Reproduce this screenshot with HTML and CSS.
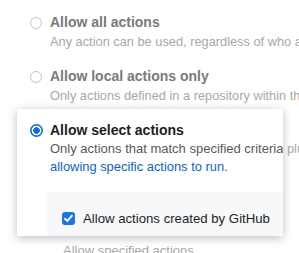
FILE: index.html
```html
<!DOCTYPE html>
<html lang="en">
<head>
    <meta charset="UTF-8">
    <meta name="viewport" content="width=device-width, initial-scale=1.0">
    <title>Actions permissions</title>
    <link rel="stylesheet" href="styles.css">
</head>
<body>
    <div class="page">
        <div class="option faded">
            <span class="radio"></span>
            <div class="option-body">
                <div class="option-title">Allow all actions</div>
                <div class="option-desc">Any action can be used, regardless of who authored it or where it is defined.</div>
            </div>
        </div>

        <div class="option faded">
            <span class="radio"></span>
            <div class="option-body">
                <div class="option-title">Allow local actions only</div>
                <div class="option-desc">Only actions defined in a repository within the enterprise can be used.</div>
            </div>
        </div>

        <div class="focus-row">
            <div class="card">
                <div class="option">
                    <span class="radio checked"></span>
                    <div class="option-body">
                        <div class="option-title">Allow select actions</div>
                        <div class="option-desc">Only actions that match specified criteria, plus actions defined in a repository within the enterprise, can be used.</div>
                        <a class="option-link" href="#">allowing specific actions to run.</a>
                    </div>
                </div>
                <div class="subpanel">
                    <label class="check">
                        <span class="checkbox">
                            <svg width="11" height="11" viewBox="0 0 11 11"><path d="M2 5.8 L4.4 8 L9 2.6" fill="none" stroke="#fff" stroke-width="1.9" stroke-linecap="round" stroke-linejoin="round"/></svg>
                        </span>
                        Allow actions created by GitHub
                    </label>
                </div>
            </div>
            <span class="behind">plus actions</span>
        </div>

        <div class="specified">Allow specified actions</div>
    </div>
</body>
</html>
```

FILE: styles.css
```css
body {
    margin: 0;
    background-color: #fff;
    font-family: 'Liberation Sans', Arial, sans-serif;
    overflow: hidden;
}

.page {
    padding-top: 12px;
    width: 299px;
    height: 253px;
    overflow: hidden;
}

.option {
    display: flex;
    align-items: flex-start;
    padding-left: 30px;
}

.option.faded {
    margin-bottom: 15px;
}

.radio {
    flex: none;
    box-sizing: border-box;
    width: 12px;
    height: 12px;
    border: 1px solid #c2c2c2;
    border-radius: 50%;
    margin-top: 5px;
    margin-right: 8px;
}

.option-body {
    min-width: 0;
    white-space: nowrap;
}

.option-title {
    font-size: 14px;
    font-weight: bold;
    line-height: 20px;
    color: #7a7a7a;
}

.option-desc {
    font-size: 12.8px;
    line-height: 19px;
    color: #a8a8a8;
}

/* highlighted card */
.focus-row {
    display: flex;
    align-items: flex-start;
    margin-top: -11px;
}

.card {
    flex: none;
    margin-left: 17px;
    width: 266px;
    height: 127px;
    background-color: #fff;
    box-shadow: 0 2px 9px rgba(0, 0, 0, 0.26);
    overflow: hidden;
}

.card .option {
    padding-top: 11px;
    padding-left: 13px;
}

.radio.checked {
    width: 13px;
    height: 13px;
    border: none;
    background: radial-gradient(circle, #0a6cf0 0 3px, #fff 3.6px 4.6px, #0a6cf0 5.2px);
    margin-top: 4px;
    margin-right: 7px;
}

.card .option-title {
    color: #1b1f23;
}

.card .option-desc {
    font-size: 13px;
    line-height: 18px;
    color: #555b61;
}

.option-link {
    display: block;
    font-size: 12.9px;
    line-height: 18px;
    color: #0a63d6;
    text-decoration: none;
}

.subpanel {
    margin-top: 16px;
    margin-left: 30px;
    height: 60px;
    box-sizing: border-box;
    padding: 18px 0 0 15px;
    background-color: #f6f8fa;
}

.check {
    display: flex;
    align-items: center;
    font-size: 13.2px;
    line-height: 17px;
    color: #1b1f23;
    white-space: nowrap;
}

.checkbox {
    flex: none;
    width: 13px;
    height: 13px;
    border-radius: 3px;
    background-color: #1a73f0;
    display: flex;
    align-items: center;
    justify-content: center;
    margin-right: 8px;
}

.behind {
    margin-top: 31px;
    margin-left: 4px;
    font-size: 12.8px;
    line-height: 18px;
    color: #a8a8a8;
    white-space: nowrap;
}

.specified {
    margin-top: 7px;
    padding-left: 63px;
    font-size: 13px;
    line-height: 16px;
    color: #a8a8a8;
    white-space: nowrap;
}
```
